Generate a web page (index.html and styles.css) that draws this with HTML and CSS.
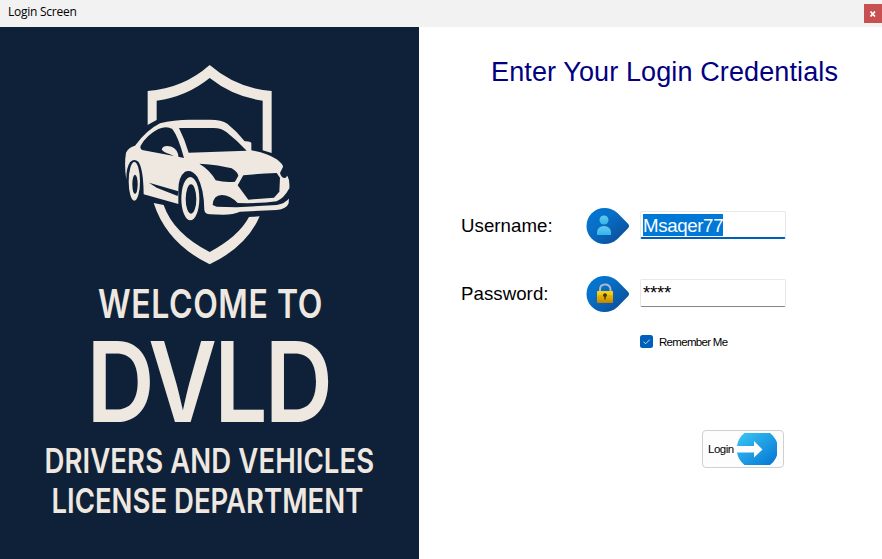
FILE: index.html
```html
<!DOCTYPE html>
<html lang="en">
<head>
<meta charset="utf-8">
<title>Login Screen</title>
<link rel="stylesheet" href="styles.css">
</head>
<body>
<header class="titlebar"><span class="caption">Login Screen</span><button class="close" aria-label="Close"><svg width="6" height="6" viewBox="0 0 6 6"><path d="M.5 .5L5 5.5M5 .5L.5 5.5" stroke="#fff" stroke-width="1.7"/></svg></button></header>
<main class="content">
<section class="poster">
<svg width="419" height="532" viewBox="0 27 419 532">
<g transform="translate(110 55) scale(.33333)" class="cream">
<path d="M113 210V108Q220 100 299 30Q380 100 485 108V294L458 286V137Q370 125 299 69Q230 125 140 137V195Q125 203 113 210Z"/>
<path d="M131 444L161 450Q190 535 299 591Q385 545 417 486L449 484Q410 575 299 628Q170 565 131 444Z"/>
<path d="M49 375Q42 330 48 293Q56 276 75 272Q110 225 150 205Q190 194 240 194H300Q335 194 352 206Q380 228 404 259Q420 258 424 264V286Q470 293 500 313Q520 328 519 336L510 354Q514 370 526 369L532 362Q540 375 538 400Q536 420 527 438L537 428L536 445Q530 462 500 465L390 470Q370 479 340 479Q315 479 300 478Q285 478 283 465Q282 400 262 365Q245 342 225 350Q205 365 205 405V447L101 418Q100 340 85 320Q72 309 60 322Q48 340 49 375Z"/>
<ellipse cx="73" cy="379" rx="17" ry="58"/>
<ellipse cx="241" cy="431" rx="27" ry="65"/>
<g class="navy">
<ellipse cx="75" cy="388" rx="8" ry="29"/>
<ellipse cx="243" cy="432" rx="16" ry="44"/>
<path d="M117 383L205 409L203 423L140 398Z"/>
<path d="M207 219H310Q335 219 350 232Q385 260 410 287L236 293Q225 255 207 219Z"/>
<path d="M92 272Q110 240 145 222Q170 212 187 222Q205 245 222 309L205 305Q205 285 185 275Q160 268 155 283Q160 292 178 297L192 303L100 286Q88 282 92 272Z"/>
<path d="M268 326Q330 330 365 340Q382 350 385 362L375 380Q345 383 317 376Q300 345 268 326Z"/>
<path d="M400 361Q450 356 500 354L510 368L508 410L492 428L415 434L383 391Z"/>
<path d="M308 450Q310 420 335 420Q360 420 383 444Q450 446 500 439Q522 430 538 400L539 428Q525 446 500 450L380 457L320 455Z"/>
</g>
</g>
<g class="poster-text">
<text transform="translate(98 317.5) scale(.81 1)" font-size="39.500" textLength="277">WELCOME TO</text>
<text class="big" transform="translate(86.500 422) scale(.85 1)" font-size="111" textLength="290">DVLD</text>
<text transform="translate(44.500 472.5) scale(.81 1)" font-size="34" textLength="407">DRIVERS AND VEHICLES</text>
<text transform="translate(51.500 512.5) scale(.81 1)" font-size="34" textLength="385">LICENSE DEPARTMENT</text>
</g>
</svg>
</section>
<section class="panel">
<h1>Enter Your Login Credentials</h1>
<form class="form">
<label class="row"><span class="label">Username:</span>
<svg class="pin" width="45" height="38" viewBox="0 0 45 38"><defs><linearGradient id="b" x1="0" y1="0" x2="1" y2="1"><stop stop-color="#0078d4"/><stop offset=".35" stop-color="#0870c8"/><stop offset="1" stop-color="#0c4790"/></linearGradient><linearGradient id="p" x1="0" y1="0" x2="0" y2="1"><stop stop-color="#65c9ef"/><stop offset="1" stop-color="#32b5ec"/></linearGradient></defs><path d="M18.500 1C23.500 1 27.500 2.500 31.500 6L42.300 17Q44 19 42.300 21L31.500 32C27.500 35.500 23.500 37 18.500 37A18 18 0 0 1 18.500 1Z" fill="url(#b)"/><circle cx="18" cy="13" r="4.500" fill="url(#p)"/><path d="M11 28V25.500Q11.500 19 18 19T25 25.500V28Z" fill="url(#p)"/></svg>
<span class="field focused"><span class="selected">Msaqer77</span></span></label>
<label class="row"><span class="label">Password:</span>
<svg class="pin" width="45" height="38" viewBox="0 0 45 38"><defs><linearGradient id="k" x1="0" y1="0" x2="0" y2="1"><stop stop-color="#f8d51c"/><stop offset=".3" stop-color="#f2c70e"/><stop offset=".31" stop-color="#eab700"/><stop offset=".65" stop-color="#daa200"/><stop offset="1" stop-color="#bd8300"/></linearGradient></defs><path d="M18.500 1C23.500 1 27.500 2.500 31.500 6L42.300 17Q44 19 42.300 21L31.500 32C27.500 35.500 23.500 37 18.500 37A18 18 0 0 1 18.500 1Z" fill="url(#b)"/><path d="M14 17V14.500Q14 9.500 19 9.500T24.500 14.500V17" fill="none" stroke="#a9b9c8" stroke-width="2"/><rect x="11" y="16" width="16" height="12" rx=".7" fill="url(#k)"/><path d="M18.300 24.500V22A2 2 0 1 1 19.700 22V24.500Z" fill="#463817"/></svg>
<span class="field password">****</span></label>
<div class="remember"><svg width="13" height="13" viewBox="0 0 13 13"><rect width="13" height="13" rx="2.500" fill="#005fb8"/><path d="M3.500 6.700L5.600 8.800L9.700 4.700" fill="none" stroke="#bfe0fa" stroke-width="1"/></svg><span>Remember Me</span></div>
<button type="button" class="login"><span>Login</span><svg width="40" height="32" viewBox="0 0 40 32"><defs><linearGradient id="a" x1="0" y1="0" x2="1" y2="1"><stop offset=".1" stop-color="#35bff1"/><stop offset=".9" stop-color="#087bd6"/></linearGradient></defs><path d="M7.500 0H33A20 20 0 0 1 33 32H7.500A20 20 0 0 1 0 19.500H17V24.500L25.500 16.500L17 8V13H0A20 20 0 0 1 7.500 0Z" fill="url(#a)"/></svg></button>
</form>
</section>
</main>
</body>
</html>
```
FILE: styles.css
```css
* { box-sizing: border-box; }
body { margin: 0; width: 882px; height: 559px; overflow: hidden; background: #fff; color: #000; font-family: "Liberation Sans", Arial, sans-serif; }
.titlebar { height: 27px; background: #f2f2f2; display: flex; justify-content: space-between; padding-left: 8px; }
.caption { font: 12px/24px "Open Sans", sans-serif; letter-spacing: -.25px; }
.close { width: 18px; height: 19px; margin: 4px 0 0; padding: 0; border: 0; background: #c75050; display: grid; place-items: center; }
.content { display: flex; height: 532px; }
.poster { width: 419px; background: #0e2138; }
.poster svg { display: block; }
.cream, .poster-text { fill: #eee8e1; }
.navy { fill: #0e2138; }
.poster-text { font-family: Inter, sans-serif; font-weight: 600; }
.panel { width: 463px; }
h1 { margin: 28px 0 0 72px; color: #000080; font-size: 27px; line-height: 34px; font-weight: 400; letter-spacing: .12px; white-space: nowrap; }
.form { margin: 118px 0 0 42px; display: flex; flex-direction: column; }
.row { display: flex; align-items: center; height: 38px; margin-bottom: 30px; }
.label { width: 125px; font-size: 18.67px; letter-spacing: .05px; }
.pin { flex: none; margin-right: 9px; }
.field { width: 146px; height: 28px; margin-bottom: 2px; padding: 2px 2px; border: 1px solid #e8e8e8; border-bottom-color: #868686; border-radius: 2px; font-size: 18.67px; line-height: 22px; }
.focused { border-bottom: 2px solid #005fb8; }
.selected { display: inline-block; height: 22px; line-height: 24px; background: #0078d7; color: #fff; letter-spacing: -.35px; }
.password { letter-spacing: -.3px; }
.remember { display: flex; align-items: center; height: 14px; margin: -9px 0 0 179px; gap: 6px; font: 11.5px/14px "Liberation Sans", sans-serif; letter-spacing: -.7px; }
.remember span { padding-top: 1px; }
.login { width: 82px; height: 38px; margin: 82px 0 0 241px; border: 1px solid #d0d0d0; border-radius: 4px; background: #fdfdfd; padding: 0 6px 0 5px; display: flex; align-items: center; justify-content: space-between; color: #000; font: 11.5px "Liberation Sans", sans-serif; letter-spacing: -.5px; }
```
